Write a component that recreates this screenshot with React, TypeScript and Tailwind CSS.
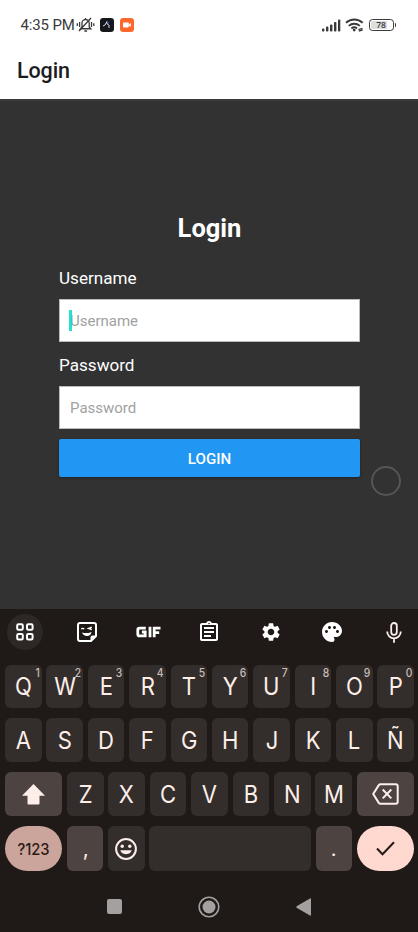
import type { ReactNode } from "react";
import { MdOutlineAssignment, MdPalette, MdSettings } from "react-icons/md";

function StatusBar() {
  return (
    <div className="flex h-[50px] items-center pl-[20.5px] pr-[22px] text-[#3a3a3a]">
      <span className="w-[54px] whitespace-nowrap text-[15px] leading-[18px] tracking-[-0.15px]">4:35 PM</span>
      <svg className="ml-[1.5px] shrink-0" width="19" height="16" viewBox="0 0 19 16" fill="none" stroke="#3a3a3a" strokeWidth="1.3">
        <path d="M5.5 11.7h8M6 11V6.3a3.6 3.6 0 0 1 7.2-.4V10l1.6 1.8H4.4L6 10M9.5 2.6V1M3 14 15 1M8.3 14h2.8M3.6 5v5M1.3 6.3v2.6M15.5 5v5M17.8 6.3v2.6" />
      </svg>
      <svg className="ml-[5px] shrink-0" width="14" height="14" viewBox="0 0 14 14">
        <rect width="14" height="14" rx="3.2" fill="#15171b" />
        <path d="m3 8 2-1 2-3.5V6l2 1v3" fill="none" stroke="#dadce8" strokeWidth="1" />
        <path d="m7 4 2 .5-1 2" stroke="#3038a8" fill="none" />
      </svg>
      <svg className="ml-[6px] shrink-0" width="14" height="14" viewBox="0 0 14 14">
        <rect width="14" height="14" rx="3.2" fill="#fc682c" />
        <rect x="3" y="4.4" width="5.8" height="5" rx=".8" fill="#fff" />
        <path d="m8.8 6.5 2-1.5v4l-2-1.5Z" fill="#fff" />
      </svg>
      <svg className="ml-auto shrink-0" width="19" height="13" viewBox="0 0 19 13" fill="#3a3a3a">
        <rect x="0" y="9.6" width="2.4" height="3" rx=".8" />
        <rect x="4" y="7.6" width="2.4" height="5" rx=".8" />
        <rect x="8" y="5.4" width="2.4" height="7.2" rx=".8" />
        <rect x="12" y="3" width="2.4" height="9.6" rx=".8" />
        <rect x="16" y="0.4" width="2.3" height="12.2" rx=".8" />
      </svg>
      <svg className="ml-[4px] shrink-0" width="19" height="14" viewBox="0 0 19 14" fill="none" stroke="#3a3a3a" strokeWidth="1.9">
        <path d="M1 4.8a12 12 0 0 1 16.6 0M3.8 7.9a8 8 0 0 1 11 0M6.4 10.5a4.4 4.4 0 0 1 5.6 0" />
        <circle cx="9.2" cy="12.1" r=".7" strokeWidth="1.4" />
        <path d="m13.4 11.6 4-1.3M13.8 13.2l4-1.3" strokeWidth="1.3" />
      </svg>
      <div className="ml-[5px] flex items-center">
        <div className="flex h-[12px] w-[25px] rounded-[3.5px] border-[1.5px] border-[#3a3a3a] p-[1px]">
          <div className="flex h-full w-full items-center justify-center rounded-[1.5px] bg-linear-to-r from-[#dedede] from-75% to-white to-75% font-['Open_Sans'] text-[8.5px] font-semibold leading-none">
            78
          </div>
        </div>
        <div className="ml-[1px] h-[4px] w-[1.5px] rounded-r bg-[#3a3a3a]" />
      </div>
    </div>
  );
}

function Key({
  children,
  hint,
  color = "bg-[#332e2b]",
  size = "flex-1",
  shape = "rounded-[6px]",
}: {
  children?: ReactNode;
  hint?: string;
  color?: string;
  size?: string;
  shape?: string;
}) {
  return (
    <div className={`relative flex h-full min-w-0 items-center justify-center ${size} ${shape} ${color}`}>
      {children}
      {hint && (
        <span className="absolute right-[2px] top-[2px] text-[11.5px] font-medium leading-[12px] text-[#c9bdb9]">
          <span className="inline-block origin-right scale-x-90">{hint}</span>
        </span>
      )}
    </div>
  );
}

function Letter({ children }: { children: string }) {
  return <span className="inline-block scale-x-[0.9] font-normal">{children}</span>;
}

function LetterRow({ letters, hints }: { letters: string; hints?: string }) {
  return (
    <div className="flex h-[43.7px] gap-[4.8px]">
      {letters.split("").map((letter, i) => (
        <Key key={letter} hint={hints?.[i]}>
          <Letter>{letter}</Letter>
        </Key>
      ))}
    </div>
  );
}

function Tool({ children, className = "" }: { children: ReactNode; className?: string }) {
  return <div className={`flex size-[36px] items-center justify-center rounded-full ${className}`}>{children}</div>;
}

const muted = "bg-[#4d4341]";
const wide = "w-[57.3px] flex-none";
const narrow = "w-[36.4px] flex-none";

function Keyboard() {
  return (
    <div className="h-[323px] bg-[#1f1a17] font-[Inter,sans-serif] text-[#feeeea]">
      <div className="flex h-[46px] items-center justify-between pl-[7px] pr-[6px] text-white">
        <Tool className="bg-[#2d2825]">
          <svg width="18" height="18" viewBox="0 0 18 18" fill="none" stroke="currentColor" strokeWidth="2">
            <rect x="1.2" y="1.2" width="5.6" height="5.6" rx="1.3" />
            <rect x="11" y="1.2" width="5.6" height="5.6" rx="1.3" />
            <rect x="1.2" y="11" width="5.6" height="5.6" rx="1.3" />
            <rect x="11" y="11" width="5.6" height="5.6" rx="1.3" />
          </svg>
        </Tool>
        <Tool>
          <svg width="20" height="20" viewBox="0 0 20 20" fill="none" stroke="currentColor" strokeWidth="2">
            <path d="M3 1h14a2 2 0 0 1 2 2v11l-5 5H3a2 2 0 0 1-2-2V3a2 2 0 0 1 2-2Z" />
            <path d="M13.5 19v-3.5a2 2 0 0 1 2-2H19L13.5 19Z" fill="currentColor" stroke="none" />
            <path d="M4.4 7.3c.6-1.2 2-1.2 2.8-.2M14.8 5.2l-3.3 1.3 3.3 1.2" strokeWidth="1.4" />
            <path d="M5 10.5c3 .9 6.2.8 9.5-.6-.4 2.7-2 4.2-4.6 4.1-2.3 0-4.1-1.2-4.9-3.5Z" fill="currentColor" stroke="none" />
          </svg>
        </Tool>
        <Tool>
          <svg width="25" height="12" viewBox="0 0 25 12" fill="none" stroke="currentColor" strokeWidth="2.8">
            <path d="M9.800 2.100H3.500c-1 0-1.700.7-1.700 1.700v4.400c0 1 .7 1.700 1.700 1.700h5.700V6H5.900M14 .7v10.600M18.200 11.300V2.100h6.300M18.200 6.700h5" />
          </svg>
        </Tool>
        <Tool className="pr-[1px]">
          <MdOutlineAssignment size={24} />
        </Tool>
        <Tool>
          <MdSettings size={22} />
        </Tool>
        <Tool className="pr-[1px]">
          <MdPalette size={24} />
        </Tool>
        <Tool className="text-[#feeeea]">
          <svg width="16" height="21" viewBox="0 0 16 21" fill="none" stroke="currentColor" strokeWidth="1.8">
            <rect x="5.2" y="1" width="5.6" height="11.8" rx="2.8" />
            <path d="M1.2 9.600a6.800 6.800 0 0 0 13.600 0M8 16.400v4.300" />
          </svg>
        </Tool>
      </div>
      <div className="flex flex-col gap-[10.2px] pl-[5px] pr-[4px] pt-[9.5px] text-[24.5px] leading-none">
        <LetterRow letters="QWERTYUIOP" hints="1234567890" />
        <LetterRow letters="ASDFGHJKLÑ" />
        <div className="flex h-[43.7px] gap-[4.8px]">
          <Key size={wide} color={muted}>
            <svg width="23" height="21" viewBox="0 0 23 21" fill="currentColor">
              <path d="M11.500 0 23 11.800h-5.500v7.700a1 1 0 0 1-1 1h-10a1 1 0 0 1-1-1v-7.700H0Z" />
            </svg>
          </Key>
          {"ZXCVBNM".split("").map((letter) => (
            <Key key={letter}>
              <Letter>{letter}</Letter>
            </Key>
          ))}
          <Key size={wide} color={muted}>
            <svg width="27" height="22" viewBox="0 0 27 22" fill="none" stroke="currentColor" strokeWidth="2">
              <path d="M8.500 1.200h15.200a2 2 0 0 1 2 2v15.600a2 2 0 0 1-2 2H8.500c-.8 0-1.300-.3-1.700-.9L1.200 11l5.600-8.900c.4-.6.9-.9 1.700-.9Z" strokeLinejoin="round" />
              <path d="m10.700 6.500 8.600 8.900m0-8.900-8.600 8.900" />
            </svg>
          </Key>
        </div>
        <div className="flex h-[45px] gap-[4.8px]">
          <Key size={wide} shape="rounded-full" color="bg-[#cba49b]">
            <span className="inline-block scale-x-[0.92] text-[16px] font-medium text-[#2b1b17]">?123</span>
          </Key>
          <Key size={narrow} color={muted}>
            <span className="pl-[1px] text-[21px]">,</span>
          </Key>
          <Key size={narrow}>
            <svg width="22" height="22" viewBox="0 0 22 22" fill="currentColor">
              <circle cx="11" cy="11" r="9.9" fill="none" stroke="currentColor" strokeWidth="2" />
              <circle cx="7.2" cy="8.2" r="1.7" />
              <circle cx="14.8" cy="8.2" r="1.7" />
              <path d="M5.300 12.300h11.400a5.900 5.200 0 0 1-11.400 0Z" />
            </svg>
          </Key>
          <Key />
          <Key size={narrow} color={muted}>
            <span className="text-[20px]">.</span>
          </Key>
          <Key size={wide} shape="rounded-full" color="bg-[#ffd9d0]">
            <svg width="19" height="15" viewBox="0 0 19 15" fill="none" stroke="#241a17" strokeWidth="2">
              <path d="m1 7.500 5.500 5.800L18 1.200" />
            </svg>
          </Key>
        </div>
      </div>
      <div className="flex h-[71px] items-center justify-center pl-[1px] text-[#a4a0a0]">
        <div className="size-[15px] rounded-[2px] bg-current" />
        <svg className="ml-[76px]" width="22" height="22" viewBox="0 0 22 22">
          <circle cx="11" cy="11" r="9.8" fill="none" stroke="currentColor" strokeWidth="1.6" />
          <circle cx="11" cy="11" r="6.5" fill="currentColor" />
        </svg>
        <svg className="ml-[76px]" width="16" height="18" viewBox="0 0 16 18" fill="currentColor">
          <path d="m1 8 13-7.500q1-.5 1 .5v16q0 1-1 .5L1 10q-1.500-1 0-2Z" />
        </svg>
      </div>
    </div>
  );
}

export default function App() {
  return (
    <div className="relative flex h-[932px] w-[418px] flex-col overflow-hidden bg-[#323232] font-[Roboto,sans-serif]">
      <header className="h-[99px] bg-white">
        <StatusBar />
        <h1 className="pl-[17px] pt-px text-[21.5px] font-medium leading-[40px] tracking-[-0.1px] text-[#1c1c1e]">Login</h1>
      </header>
      <main className="flex flex-1 flex-col border-t-2 border-[#3a3a38] px-[59px] pt-[111px] text-white">
        <h2 className="pl-[1px] text-center text-[25.5px] font-bold leading-[32px]">Login</h2>
        <label className="mt-[23px] text-[17.1px] leading-[22px]">Username</label>
        <div className="mt-[10px] flex h-[43px] w-[301px] items-center border border-[#bbb] bg-white pl-[10px] pt-[2px] text-[15px] text-[#a1a1a1]">
          <span className="relative">
            Username
            <span className="absolute left-[-1px] top-0 h-[21px] w-[3px] bg-[#03dac5]/85" />
          </span>
        </div>
        <label className="mt-[12px] text-[17.1px] leading-[22px]">Password</label>
        <div className="mt-[10px] flex h-[43px] w-[301px] items-center border border-[#bbb] bg-white pl-[10px] pt-[2px] text-[15px] text-[#a1a1a1]">
          Password
        </div>
        <button className="mt-[10px] h-[38px] w-[301px] rounded-[2px] bg-[#2196f3] pt-[2px] text-[15.1px] font-medium shadow-[0_1px_3px_rgba(0,0,0,0.35)]">
          LOGIN
        </button>
      </main>
      <div className="absolute left-[371px] top-[466px] size-[30px] rounded-full border-2 border-[#555]" />
      <Keyboard />
    </div>
  );
}
